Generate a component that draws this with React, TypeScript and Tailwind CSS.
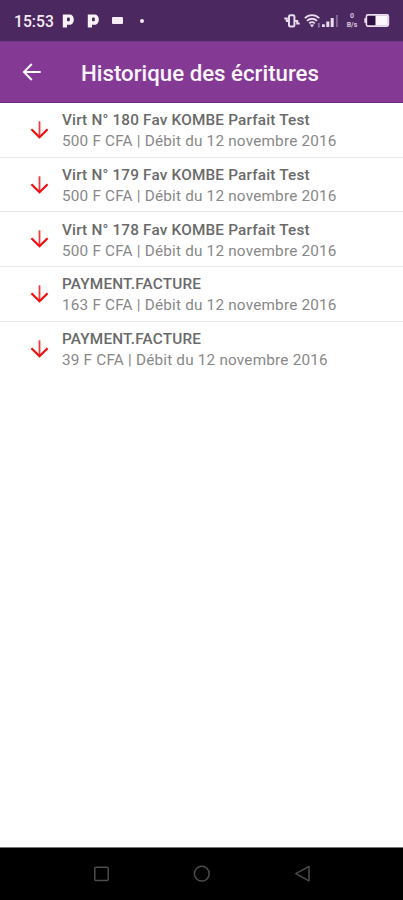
import React from 'react'

interface Entry {
  title: string
  amount: string
  date: string
}

const entries: Entry[] = [
  { title: 'Virt N° 180 Fav KOMBE Parfait Test', amount: '500 F CFA', date: '12 novembre 2016' },
  { title: 'Virt N° 179 Fav KOMBE Parfait Test', amount: '500 F CFA', date: '12 novembre 2016' },
  { title: 'Virt N° 178 Fav KOMBE Parfait Test', amount: '500 F CFA', date: '12 novembre 2016' },
  { title: 'PAYMENT.FACTURE', amount: '163 F CFA', date: '12 novembre 2016' },
  { title: 'PAYMENT.FACTURE', amount: '39 F CFA', date: '12 novembre 2016' },
]

const ParkingIcon: React.FC = () => (
  <svg className="w-[13px] h-[14px] shrink-0" viewBox="0 0 13 14" fill="none">
    <path d="M0.8 0.5H7.5C10.3 0.5 11.8 2.6 11.8 5.4C11.8 8.6 10 10.8 7.5 10.8H5V13.5H0.8Z" fill="#fbf2fb" />
    <rect x="5" y="3.6" width="2.8" height="3.6" rx="0.8" fill="#4b2860" />
  </svg>
)

const VibrateIcon: React.FC = () => (
  <svg className="w-4 h-[14px] shrink-0" viewBox="0 0 16 14" fill="none" stroke="#e8dced">
    <rect x="5" y="1.2" width="5.4" height="11.4" rx="1.4" strokeWidth="2" />
    <path d="M0.3 4.4H2.8V7H5M15.7 9.6H13.2V7H11" strokeWidth="2" />
  </svg>
)

const WifiIcon: React.FC = () => (
  <svg className="w-[18px] h-[14px] shrink-0" viewBox="0 0 18 14" fill="none" stroke="#e8dced">
    <path d="M0.8 4.2C4.8 0 11.2 0 15.2 4.2" strokeWidth="1.8" />
    <path d="M3 6.9C5.9 4 10.1 4 13 6.9" strokeWidth="1.8" />
    <path d="M5.2 9.4C6.9 7.9 9.1 7.9 10.8 9.4" strokeWidth="1.8" />
    <path d="M5.8 10.5L8 13.6L10.2 10.5Z" fill="#e8dced" stroke="none" />
    <path d="M14.8 9V13.5" stroke="#8f76a0" strokeWidth="1.8" />
  </svg>
)

const SignalIcon: React.FC = () => (
  <svg className="w-[18px] h-[13px] shrink-0" viewBox="0 0 18 13">
    <rect x="0" y="10.3" width="2.8" height="2.7" fill="#e8dced" />
    <rect x="4.3" y="7.5" width="3" height="5.5" fill="#e8dced" />
    <rect x="8.7" y="4" width="3" height="9" fill="#e8dced" />
    <rect x="14" y="1" width="1.8" height="12" fill="#836a94" />
  </svg>
)

const BatteryIcon: React.FC = () => (
  <svg className="w-[26px] h-[13px] shrink-0" viewBox="0 0 26 13">
    <rect x="0.3" y="4" width="2" height="5" rx="0.7" fill="#e8dced" />
    <rect x="2.4" y="0.9" width="22" height="11.2" rx="1.5" fill="#2f1243" stroke="#e8dced" strokeWidth="1.6" />
    <rect x="11.5" y="1.5" width="12.3" height="10" fill="#fbf7fc" />
  </svg>
)

const StatusBar: React.FC = () => (
  <div className="h-[41px] shrink-0 bg-[#4b2860] flex items-center justify-between pl-[14px] pr-[13px] text-[#f6ebf6]">
    <div className="flex items-center">
      <span className="w-12 text-[15.7px] leading-5 font-medium pt-[2px]">15:53</span>
      <ParkingIcon />
      <span className="w-3" />
      <ParkingIcon />
      <span className="ml-3 w-[11px] h-[7px] rounded-[1px] bg-[#f6ebf6]" />
      <span className="ml-[17px] size-1 rounded-full bg-[#f6ebf6]" />
    </div>
    <div className="flex items-center">
      <VibrateIcon />
      <span className="w-[4px]" />
      <WifiIcon />
      <SignalIcon />
      <div className="w-[14px] ml-[5px] mr-[5px] flex flex-col items-center text-[7px] leading-[9px] font-bold text-[#d8c9df]">
        <span>0</span>
        <span>B/s</span>
      </div>
      <BatteryIcon />
    </div>
  </div>
)

const Header: React.FC = () => (
  <header className="h-[62px] shrink-0 bg-[#843a94] border-t border-[#753489] border-b border-b-[#6d2680] flex items-center pl-[22px]">
    <button className="w-[59px]" aria-label="Retour">
      <svg className="w-5 h-5" viewBox="0 0 20 20" fill="none" stroke="#fff" strokeWidth="1.9">
        <path d="M18.7 10H2.2M9.8 2L1.9 10L9.8 18" />
      </svg>
    </button>
    <h1 className="text-[22.25px] leading-7 font-medium text-[#fdf5fd] whitespace-nowrap pt-[1px]">
      Historique des écritures
    </h1>
  </header>
)

const EntryRow: React.FC<{ entry: Entry }> = ({ entry }) => (
  <li className="h-[54.7px] flex items-center pl-[30px] border-b border-[#e6e6e6] last:border-transparent">
    <svg className="w-[19px] h-5 shrink-0" viewBox="0 0 19 20" fill="none" stroke="#ee1111">
      <path d="M9.5 1.3V17" stroke="#f23a3a" strokeWidth="1.8" />
      <path d="M1.4 9.3L9.5 17.2L17.6 9.3" strokeWidth="2.3" />
    </svg>
    <div className="ml-[13px] pt-[3px] whitespace-nowrap">
      <p className="text-[15.3px] leading-[21px] tracking-[0.19px] font-medium text-[#6a6a6a]">{entry.title}</p>
      <p className="text-[15.3px] leading-[21px] tracking-[0.2px] text-[#888]">
        {entry.amount} | Débit du {entry.date}
      </p>
    </div>
  </li>
)

const NavigationBar: React.FC = () => (
  <div className="h-[53px] shrink-0 bg-black border-t border-[#777] flex items-center justify-center">
    <svg className="w-[220px] h-5" viewBox="0 0 220 20" fill="none" stroke="#4c4c4c" strokeWidth="1.5">
      <rect x="2.8" y="3.2" width="13.4" height="13.2" rx="1" />
      <circle cx="109.8" cy="9.7" r="7.4" />
      <path d="M217 2.4V16.8L203.8 9.6Z" strokeLinejoin="round" />
    </svg>
  </div>
)

export default function App() {
  return (
    <div className="h-screen w-full flex flex-col bg-white overflow-hidden font-[Roboto,sans-serif]">
      <StatusBar />
      <Header />
      <main className="flex-1 min-h-0">
        <ul>
          {entries.map((entry, index) => (
            <EntryRow key={index} entry={entry} />
          ))}
        </ul>
      </main>
      <NavigationBar />
    </div>
  )
}
